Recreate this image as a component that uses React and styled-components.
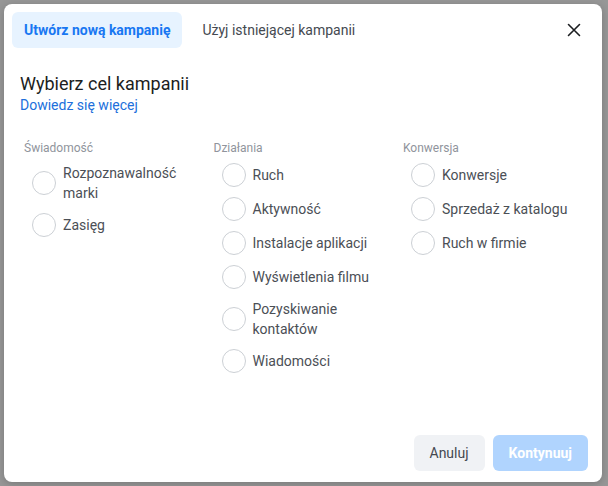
import React from "react";
import styled, { createGlobalStyle } from "styled-components";

const Global = createGlobalStyle`
  html, body { margin: 0; padding: 0; background: #979797; }
  body { font-family: Roboto, "Noto Sans", Arial, sans-serif; }
  * { box-sizing: border-box; }
`;

const Page = styled.div`
  width: 608px;
  height: 486px;
  padding: 4px 6px 4px 4px;
  background: #979797;
`;

const Modal = styled.div`
  width: 598px;
  height: 478px;
  background: #fff;
  border-radius: 8px;
  display: flex;
  flex-direction: column;
  box-shadow: 0 2px 8px rgba(0, 0, 0, 0.2);
`;

const Header = styled.div`
  display: flex;
  align-items: center;
  padding: 8px 8px 0 8px;
`;

const Tab = styled.button`
  height: 36px;
  padding: 0 12px;
  border: none;
  border-radius: 6px;
  background: ${(p) => (p.$active ? "#e7f3ff" : "transparent")};
  color: ${(p) => (p.$active ? "#1877f2" : "#444950")};
  font-family: Roboto, Arial, sans-serif;
  font-size: 14px;
  font-weight: ${(p) => (p.$active ? 700 : 400)};
  margin-right: 8px;
  cursor: pointer;
`;

const Close = styled.button`
  margin-left: auto;
  width: 32px;
  height: 36px;
  border: none;
  background: transparent;
  display: flex;
  align-items: center;
  justify-content: center;
  margin-right: 4px;
  padding: 0;
`;

const Body = styled.div`
  padding: 24px 16px 0 16px;
`;

const Title = styled.h2`
  margin: 0;
  font-size: 18px;
  line-height: 24px;
  font-weight: 400;
  color: #1c1e21;
`;

const Link = styled.a`
  display: block;
  font-size: 14px;
  line-height: 18px;
  color: #216fdb;
  text-decoration: none;
`;

const Columns = styled.div`
  display: grid;
  grid-template-columns: repeat(3, 189.5px);
  padding: 24px 0 0 4px;
`;

const Column = styled.div`
  display: flex;
  flex-direction: column;
`;

const GroupTitle = styled.div`
  font-size: 12px;
  line-height: 20px;
  color: #90949c;
`;

const Option = styled.label`
  display: flex;
  align-items: center;
  padding: 5px 8px 5px 8px;
  cursor: pointer;
`;

const Circle = styled.span`
  flex: 0 0 24px;
  width: 24px;
  height: 24px;
  border-radius: 50%;
  border: 1px solid #ccd0d5;
  margin-right: 7px;
`;

const OptionText = styled.span`
  font-size: 14px;
  line-height: 20px;
  color: #4b4f56;
  padding-right: 8px;
`;

const Footer = styled.div`
  margin-top: auto;
  display: flex;
  justify-content: flex-end;
  gap: 8px;
  padding: 0 14px 11px 0;
`;

const Button = styled.button`
  height: 36px;
  padding: 0 16px;
  border: none;
  border-radius: 6px;
  font-family: Roboto, Arial, sans-serif;
  font-size: 14px;
  font-weight: ${(p) => (p.$primary ? 700 : 400)};
  background: ${(p) => (p.$primary ? "#b0d4fe" : "#f0f2f5")};
  color: ${(p) => (p.$primary ? "#ffffff" : "#444950")};
`;

const groups = [
  { title: "Świadomość", items: ["Rozpoznawalność marki", "Zasięg"] },
  {
    title: "Działania",
    items: [
      "Ruch",
      "Aktywność",
      "Instalacje aplikacji",
      "Wyświetlenia filmu",
      "Pozyskiwanie kontaktów",
      "Wiadomości",
    ],
  },
  { title: "Konwersja", items: ["Konwersje", "Sprzedaż z katalogu", "Ruch w firmie"] },
];

export default function App() {
  return (
    <>
      <Global />
      <Page>
        <Modal>
          <Header>
            <Tab $active>Utwórz nową kampanię</Tab>
            <Tab>Użyj istniejącej kampanii</Tab>
            <Close aria-label="Zamknij">
              <svg width="14" height="14" viewBox="0 0 14 14">
                <path d="M1.5 1.5 L12.5 12.5 M12.5 1.5 L1.5 12.5" stroke="#1c1e21" strokeWidth="1.6" strokeLinecap="round" />
              </svg>
            </Close>
          </Header>
          <Body>
            <Title>Wybierz cel kampanii</Title>
            <Link href="#">Dowiedz się więcej</Link>
            <Columns>
              {groups.map((g) => (
                <Column key={g.title}>
                  <GroupTitle>{g.title}</GroupTitle>
                  {g.items.map((it) => (
                    <Option key={it}>
                      <Circle />
                      <OptionText>{it}</OptionText>
                    </Option>
                  ))}
                </Column>
              ))}
            </Columns>
          </Body>
          <Footer>
            <Button>Anuluj</Button>
            <Button $primary>Kontynuuj</Button>
          </Footer>
        </Modal>
      </Page>
    </>
  );
}
